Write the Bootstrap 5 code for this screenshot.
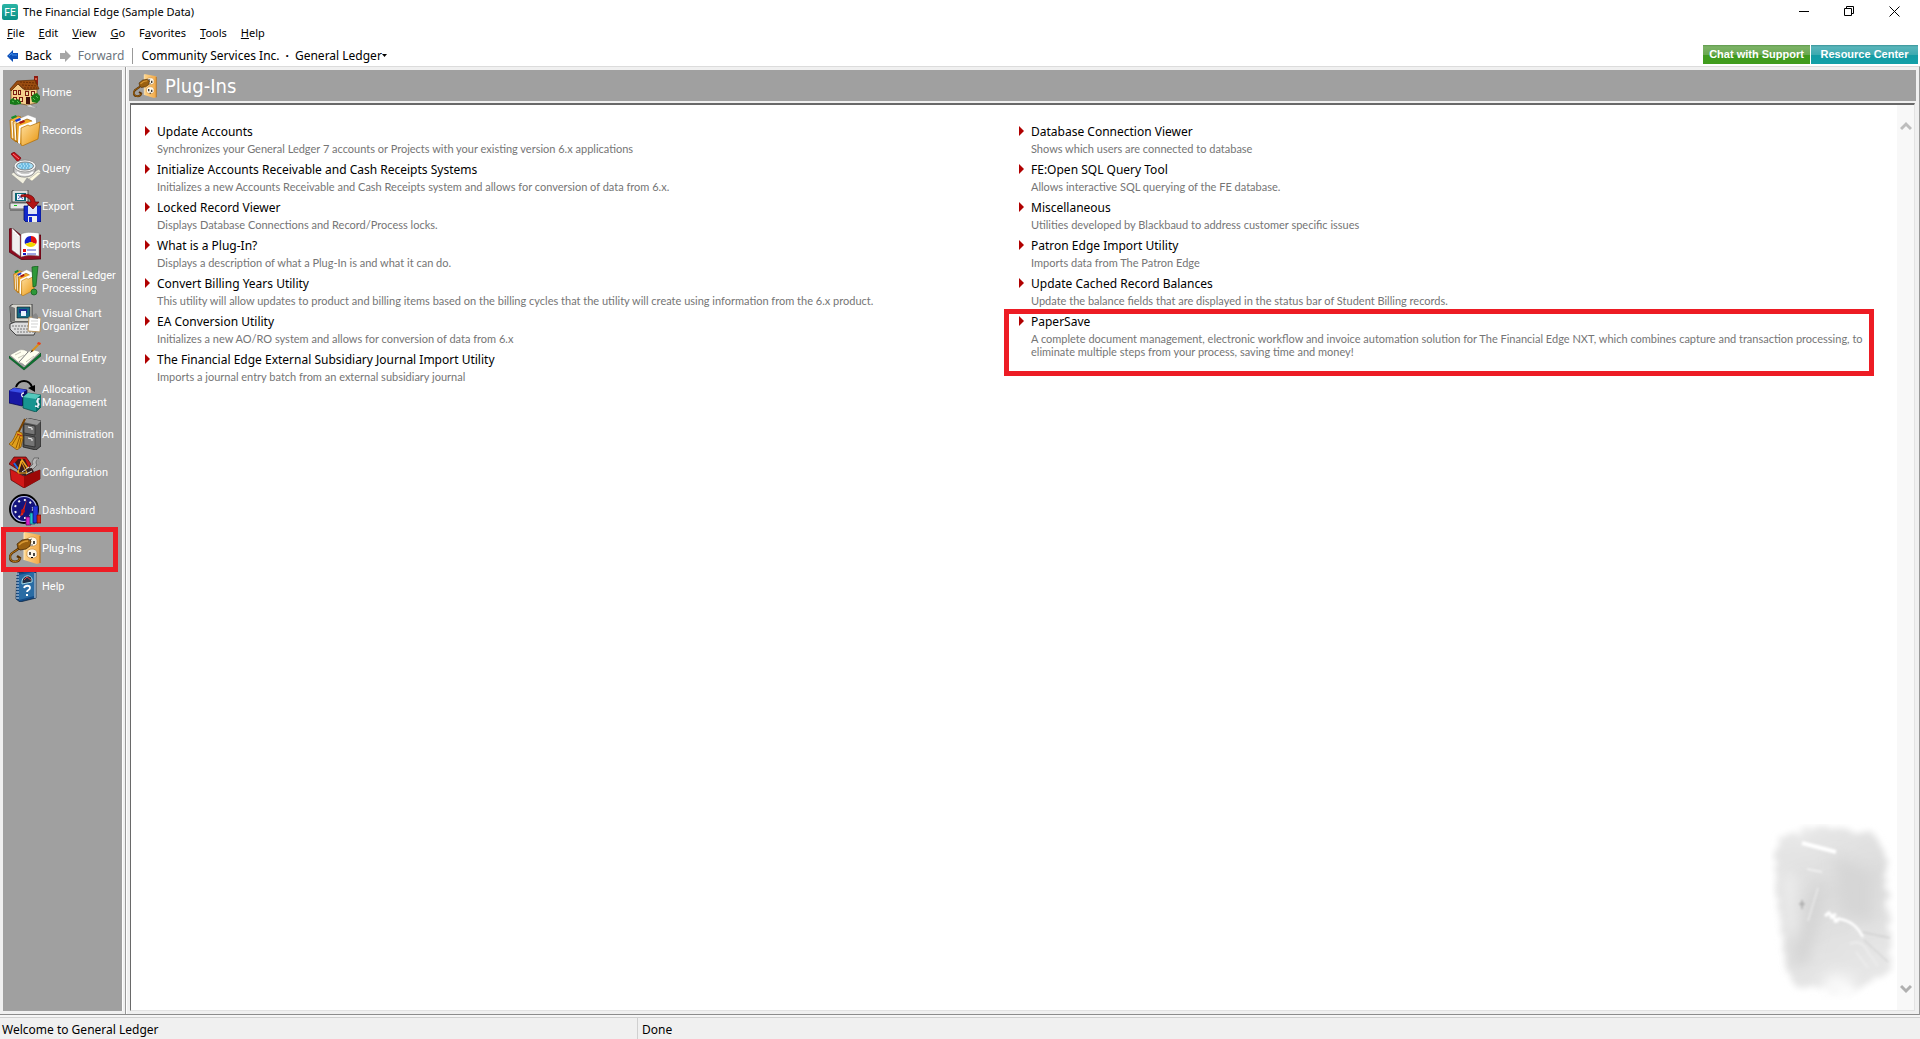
<!DOCTYPE html>
<html lang="en">
<head>
<meta charset="utf-8">
<meta name="viewport" content="width=device-width, initial-scale=1">
<title>The Financial Edge (Sample Data)</title>
<link href="https://cdn.jsdelivr.net/npm/bootstrap@5.3.0/dist/css/bootstrap.min.css" rel="stylesheet">
<style>
  body { font: 12px/18px "Noto Sans", sans-serif; color: #000; background: #fff; }
  button { border: 0; background: none; padding: 0; color: inherit; font: inherit; text-align: left; }
  a { color: inherit; text-decoration: none; }
  svg { display: block; flex: none; }
  .title-bar { height: 23px; padding-left: 2px; padding-right: 20px; gap: 5px; font-size: 11px; }
  .title-bar .fe-logo { width: 16px; height: 16px; border-radius: 2px; background: linear-gradient(#2bb5a5, #0a8f86); color: #fff; font: 11px/16px "Noto Sans", sans-serif; text-align: center; }
  .win-controls { gap: 34px; }
  .menu-bar { height: 20px; padding-left: 7px; gap: 14px; font-size: 11px; }
  .tool-bar { height: 23px; padding: 2px 2px 0 7px; }
  .tool-bar .nav-btn { gap: 7px; }
  .tool-sep { width: 1px; height: 16px; background: #999; margin: 0 8px; }
  .dot-sep { margin: 0 6px; }
  .promo-bar { gap: 1px; }
  .promo { height: 19px; width: 107px; color: #fff; font: bold 11px/19px "Liberation Sans", sans-serif; text-align: center; }
  .promo-green { background: linear-gradient(#5f9a4c, #7cb366 10%, #6aa850 50%, #419a1f 52%, #3f9c1c); }
  .promo-teal { background: linear-gradient(#3a9499, #58b5ba 10%, #3daab0 50%, #149ba3 52%, #12a0a8); }
  .work-area { background: #f0f0f0; border-top: 1px solid #dcdcdc; border-bottom: 1px solid #8c8c8c; border-right: 1px solid #999; }
  .side-pane { width: 126px; padding: 3px 2px 3px 3px; border-right: 1px solid #999; }
  .side-list { background: #a0a0a0; padding-top: 3px; border-right: 1px solid #fff; }
  .side-link { height: 38px; padding-left: 6px; gap: 1px; color: #fff; font: 11px/13px Roboto, sans-serif; }
  .marked { position: relative; }
  .marked::after { content: ""; position: absolute; border: 5px solid #ed1c24; pointer-events: none; z-index: 2; }
  .side-link.marked::after { inset: -2px 4px -5px -2px; }
  .main-pane { padding: 3px 3px 3px 2px; border-left: 1px solid #fff; }
  .pane-head { height: 31px; background: #a0a0a0; padding-left: 4px; gap: 8px; color: #fff; font: 20px/28px "DejaVu Sans Condensed", "DejaVu Sans", sans-serif; }
  .pane-body { margin: 2px 1px 0 1px; background: #fff; border: 1px solid #e3e3e3; border-left-color: #696969; border-top: 2px solid #696969; position: relative; }
  .plug-area { padding: 18px 4px 0 14px; }
  .plug-item { margin-bottom: 6px; padding-right: 26px; }
  .plug-item > svg { margin-top: 3px; margin-right: 7px; }
  .plug-item a { display: block; height: 19px; }
  .plug-item p { margin: 0; color: #757575; font: 11px/13px Lato, sans-serif; }
  .plug-item.marked::after { inset: -4px 19px -18px -15px; }
  .scroll-col { width: 17px; background: #f8f8f8; padding: 16px 0; }
  .watermark { position: absolute; right: 18px; bottom: 10px; }
  .status-bar { height: 24px; border-top: 2px solid #f6f6f6; background: #f0f0f0; }
  .status-bar > div { padding: 3px 2px 0; }
  .status-main { width: 638px; border-top: 1px solid #d0d0d0; border-right: 1px solid #d0d0d0; }
  .status-rest { border-top: 1px solid #d0d0d0; }
  .status-bar > .status-rest { padding-left: 4px; }
</style>
<script src="https://cdn.jsdelivr.net/npm/bootstrap@5.3.0/dist/js/bootstrap.bundle.min.js"></script>
</head>
<body>
<svg width="0" height="0" class="position-absolute" aria-hidden="true">
  <defs>
    <linearGradient id="gFolder" x1="0" y1="0" x2="1" y2="1"><stop offset="0" stop-color="#ffe0a0"/><stop offset="1" stop-color="#e8940c"/></linearGradient>
    <linearGradient id="gPlate" x1="0" y1="0" x2="1" y2="0"><stop offset="0" stop-color="#ffd58a"/><stop offset="1" stop-color="#f0a848"/></linearGradient>
    <symbol id="i-plug" viewBox="0 0 32 32">
      <path d="M15 0 31 3v28l-3 1-13-4z" fill="url(#gPlate)"/><path d="M31 4v27" stroke="#b06a10"/><path d="M15 1v27" stroke="#ffeabf"/>
      <path d="M18 8c1-4 9-4 10 0v4c-2 3-8 3-10 0zM18 20c1-4 9-4 10 0v4c-2 3-8 3-10 0z" fill="#fff8e8" stroke="#c98a3a" stroke-width=".7"/>
      <path d="M21 8v3M25 9v3M21 20v3M25 21v3" stroke="#111" stroke-width="1.500"/><path d="M22 25h2v1h-2z"/>
      <path d="M10 16C7 20 1 20 1 25c0 6 9 6 10 1l-3-2" fill="none" stroke="#5a3000" stroke-width="2.400"/><path d="M10 16C7 20 1 20 1 25c0 6 9 6 10 1" fill="none" stroke="#b87818" stroke-width="1"/>
      <path d="M8 12l5-4 6-1 3 2-1 5-4 3-6 1-2-2z" fill="#9a6010" stroke="#4a2800" stroke-width=".8"/><path d="M10 13c3-3 6-4 9-4" stroke="#d99a35" stroke-width="1.500" fill="none"/><path d="M20 8l3-1m-2 6l3 0" stroke="#666"/>
    </symbol>
    <symbol id="i-files" viewBox="0 0 32 32">
      <path d="M1 6 9 2l3 1v18l-5 7-5-4z" fill="#f6b23c" stroke="#a96200" stroke-width=".7"/><path d="M2 3l5-2 1 2-5 2z" fill="#16902c"/>
      <path d="M3 7l1 17" stroke="#fff" stroke-width="1.200"/>
      <path d="M4 8l10-5 3 1v18l-7 7-5-3z" fill="url(#gFolder)" stroke="#9a5c00" stroke-width=".7"/><path d="M7 6l12-5 8 3v5L9 13z" fill="#fff" stroke="#999" stroke-width=".4"/><path d="M6 6l5-2 1 2-5 2z" fill="#1838d8"/>
      <path d="M6 10l1 16" stroke="#fff" stroke-width="1.200"/>
      <path d="M7 10l11-5 5 2v16l-11 7-4-2z" fill="#f3a928" stroke="#8c5300" stroke-width=".7"/><path d="M10 8l5-2 1 2-5 2z" fill="#a81414"/><path d="M10 12l17-6v4l-15 6-1 14-2-1z" fill="#fff"/>
      <path d="M12 14l7-3 2 1 10-4-2 17-16 7-1-2z" fill="url(#gFolder)" stroke="#b06c00" stroke-width=".7"/>
    </symbol>
  </defs>
</svg>

<div class="vh-100 d-flex flex-column overflow-hidden">
  <header>
    <div class="title-bar d-flex align-items-center">
      <span class="fe-logo" aria-hidden="true">FE</span><span>The Financial Edge (Sample Data)</span>
      <div class="win-controls ms-auto d-flex align-items-center">
        <button aria-label="Minimize"><svg width="11" height="11"><path d="M0 5.500h10" stroke="#000"/></svg></button>
        <button aria-label="Restore"><svg width="11" height="11" fill="none" stroke="#000"><path d="M.5 2.500h7v7h-7zM2.500 2.500v-2h7v7h-2"/></svg></button>
        <button aria-label="Close"><svg width="11" height="11"><path d="M.5.5l10 10m0-10l-10 10" stroke="#000"/></svg></button>
      </div>
    </div>
    <nav class="menu-bar d-flex align-items-center" aria-label="Menu">
      <button><u>F</u>ile</button><button><u>E</u>dit</button><button><u>V</u>iew</button><button><u>G</u>o</button><button>F<u>a</u>vorites</button><button><u>T</u>ools</button><button><u>H</u>elp</button>
    </nav>
    <div class="tool-bar d-flex align-items-center">
      <button class="nav-btn d-flex align-items-center"><svg width="11" height="12"><path d="M0 6l6-6v3h5v6H6v3z" fill="#0d4fb8"/><path d="M2 6l3-3v2h5" fill="none" stroke="#3f8be8"/></svg>Back</button>
      <button class="nav-btn d-flex align-items-center text-secondary ms-2"><svg width="11" height="12"><path d="M11 6L5 0v3H0v6h5v3z" fill="#a6a6a6"/></svg>Forward</button>
      <span class="tool-sep"></span>
      <a href="#">Community Services Inc.</a><span class="dot-sep fw-bold">·</span>
      <button class="d-flex align-items-center">General Ledger<svg width="5" height="3"><path d="M0 0h5L2.500 3z"/></svg></button>
      <div class="promo-bar ms-auto d-flex align-self-start"><a href="#" class="promo promo-green">Chat with Support</a><a href="#" class="promo promo-teal">Resource Center</a></div>
    </div>
  </header>

  <div class="work-area flex-grow-1 d-flex">
    <aside class="side-pane d-flex flex-shrink-0">
      <nav class="side-list flex-grow-1" aria-label="Sections">
        <a href="#" class="side-link d-flex align-items-center"><svg width="32" height="32">
          <path d="M16 28l5-1 2 3 5 1-3 1-6-1z" fill="#d4d4d4" stroke="#888" stroke-width=".5"/>
          <path d="M2 13l6-6 6 6h14v14l-10 2L2 26z" fill="#f6cf8c" stroke="#5c3608" stroke-width=".6"/>
          <path d="M25 0h4v9h-4z" fill="#8e1c10"/><path d="M26 2h2v2h-2z" fill="#d95a42"/>
          <path d="M1 13L8 5l18-1 4 9-14 1-7-6-7 7z" fill="#9a4d10" stroke="#5b2800" stroke-width=".7"/><path d="M11 6l16 1M13 9l15 1M15 12l13 0" stroke="#6a2d04" stroke-width="1" stroke-dasharray="2 1"/>
          <path d="M4 14h4v5H4zM9 14h3v5H9zM16 15h4v5h-4zM22 15h4v5h-4zM4 21h4v5H4zM10 21h4v5h-4z" fill="#7a1a10"/><path d="M5 15h2v3H5zM10 15h1v3h-1zM17 16h2v3h-2zM23 16h2v3h-2zM5 22h2v3H5zM11 22h2v3h-2z" fill="#e8dfa0"/>
          <path d="M17 21h4v7h-4z" fill="#401008"/>
          <path d="M1 24l3-2 2 2 3-1 3 3v2l-6 1-5-1zM22 21l3-3 3-1 3 3v4l-3 3-5-1z" fill="#187818"/><path d="M3 25l2 1m3-1l2 2m14-5l2 2m1-4l2 2" stroke="#55c050"/></svg>Home</a>
        <a href="#" class="side-link d-flex align-items-center"><svg width="32" height="32"><use href="#i-files"/></svg>Records</a>
        <a href="#" class="side-link d-flex align-items-center"><svg width="32" height="32">
          <path d="M2 22l8-5 12 5 8-5 2 3-9 9-5-3-4 6z" fill="#f2f0e0" stroke="#888" stroke-width=".5"/><path d="M20 27l9-7 3 1-9 8z" fill="#fffbe0" stroke="#999" stroke-width=".5"/>
          <path d="M2 2l3-2 7 6-3 4z" fill="#c81018" stroke="#700008" stroke-width=".7"/><path d="M4 2l6 5" stroke="#ff8080"/>
          <path d="M5 15v5c3 7 19 7 21-1v-5z" fill="#ccc" stroke="#666" stroke-width=".6"/><path d="M8 20c4 4 12 4 16 0" fill="none" stroke="#fff" stroke-width="1.500"/>
          <ellipse cx="16" cy="14" rx="11" ry="6" fill="#f4f4f4" stroke="#888" stroke-width=".8"/><ellipse cx="16" cy="14" rx="8.500" ry="4" fill="#a5dcf4" stroke="#555" stroke-width=".7"/><path d="M10 14h12M12 16h9M12 12h8" stroke="#3c9ccc" stroke-dasharray="2 1"/></svg>Query</a>
        <a href="#" class="side-link d-flex align-items-center"><svg width="32" height="32">
          <path d="M3 1l2-1h14v12H3z" fill="#ddd" stroke="#333" stroke-width=".8"/><path d="M6 3h11v8H6z" fill="#0c6674"/><path d="M8 4h7v6H8z" fill="#f5f5ff"/><path d="M9 5l5 4m0-4l-5 4" stroke="#5068c0"/>
          <path d="M1 13h18v6H1z" fill="#e6e6e6" stroke="#444" stroke-width=".8"/><path d="M5 15h3v1H5z" fill="#10c818"/><path d="M1 20h14v1H1z" fill="#777"/>
          <path d="M15 16h17v16H17l-2-2z" fill="#1228cc" stroke="#00106a" stroke-width=".8"/><path d="M19 16h9v8h-9z" fill="#dfe4f4"/><path d="M19 26h9v6h-9z" fill="#eee"/><path d="M20 27h3v5h-3z" fill="#1228cc"/>
          <path d="M12 5c8-2 14 1 14 7h4l-6 7-7-7h5c-1-4-4-6-10-5z" fill="#b41414" stroke="#600" stroke-width=".7"/></svg>Export</a>
        <a href="#" class="side-link d-flex align-items-center"><svg width="32" height="32">
          <path d="M0 1l3-1 9 7h20v24l-19 1L0 24z" fill="#8c0c20" stroke="#3a0008" stroke-width=".6"/><path d="M3 0l8 8v20l-8-6z" fill="#fff" stroke="#888" stroke-width=".6"/><path d="M5 4v18M7 6v18M9 8v18" stroke="#ccc" stroke-width=".6"/>
          <path d="M12 6c4-2 10-2 18-1v23c-7-1-13-1-18 1z" fill="#fff" stroke="#777" stroke-width=".5"/>
          <path d="M22 14V8a6 6 0 0 0-6 8z" fill="#1420c8"/><path d="M22 14V8c5 0 7 5 5 8z" fill="#e01010"/><path d="M22 14l5 2c-2 4-8 4-11 0z" fill="#f0d800"/>
          <path d="M14 21h3v3h-3z" fill="#e01010"/><path d="M14 25h3v2h-3z" fill="#1420c8"/><path d="M18 22h9M18 26h9" stroke="#4450c8"/></svg>Reports</a>
        <a href="#" class="side-link d-flex align-items-center"><svg width="32" height="32">
          <svg x="4" y="3" width="23" height="27" viewBox="0 0 32 32" preserveAspectRatio="none"><use href="#i-files"/></svg>
          <path d="M23 1l6-1-2 20-3 1z" fill="#2e9838" stroke="#0d5a18" stroke-width=".7"/><circle cx="25" cy="26" r="3" fill="#2e9838" stroke="#0d5a18" stroke-width=".7"/></svg>General Ledger<br>Processing</a>
        <a href="#" class="side-link d-flex align-items-center"><svg width="32" height="32">
          <path d="M1 2l3-2h19v15l-3 3H2z" fill="#d8d8d0" stroke="#222" stroke-width=".8"/><path d="M1 2l5 2v13H2z" fill="#777"/><path d="M8 3h13v11H8z" fill="#146a84" stroke="#111" stroke-width=".6"/><path d="M10 5h8v4h-8z" fill="#1c2c90"/><path d="M12 7h5v5h-5z" fill="#e8f2ff"/>
          <path d="M1 20l5-2h18l3 8-2 5H7l-6-6z" fill="#ddd" stroke="#222" stroke-width=".8"/><path d="M3 22h18M5 25h17M8 28h18" stroke="#777" stroke-dasharray="2 1"/>
          <path d="M20 13l12 1-1 14-12-1z" fill="#fff" stroke="#b5905a"/><path d="M23 14l1-3 3-2 2 3v3z" fill="#888"/><path d="M22 17h7M22 20h7M22 23h6" stroke="#bbb" stroke-width=".7"/></svg>Visual Chart<br>Organizer</a>
        <a href="#" class="side-link d-flex align-items-center"><svg width="32" height="32">
          <path d="M0 14l15 12 17-15v3L15 28 0 16z" fill="#0a7830" stroke="#033c14" stroke-width=".5"/>
          <path d="M1 13l9-5c4-1 7 0 9 2 3-2 6-3 12 0L16 24c-2-3-5-3-7-4z" fill="#fffff0" stroke="#888" stroke-width=".6"/><path d="M19 10L10 20" stroke="#777"/><path d="M6 13l6-3m-3 6l6-3m2 7l8-6m-5 3" stroke="#b8b8a8" stroke-width=".8"/>
          <path d="M31 1l-8 8" stroke="#d89018" stroke-width="2"/><path d="M29 0l3 1-1 2-3-1z" fill="#e84020"/><path d="M23 8l1 1-3 2z"/></svg>Journal Entry</a>
        <a href="#" class="side-link d-flex align-items-center"><svg width="32" height="32">
          <path d="M0 11l5-3 13 2v12l-5 4-13-3z" fill="#1818a4" stroke="#00004c" stroke-width=".7"/><path d="M0 11l5-3 13 2-5 3z" fill="#3c50e8"/><path d="M13 13l5-3v12l-5 4z" fill="#0a0a6a"/>
          <path d="M14 17l5-4 13 2v12l-5 5-13-4z" fill="#189490" stroke="#044844" stroke-width=".7"/><path d="M14 17l5-4 13 2-5 4z" fill="#54c8bc"/><path d="M27 19l5-4v12l-5 5z" fill="#087068"/>
          <path d="M31 19c-3-1-4 3-2 4s1 4-3 3M29 18v10M15 13c-3 0-3 3-1 4" stroke="#f4f4ff" stroke-width="1.300" fill="none"/>
          <path d="M7 7C10-1 20-1 23 7" fill="none" stroke="#000" stroke-width="2"/><path d="M19 8l7-3v7z"/></svg>Allocation<br>Management</a>
        <a href="#" class="side-link d-flex align-items-center"><svg width="32" height="32">
          <path d="M14 4l4-4 14 3v25l-5 4-13-3z" fill="#555" stroke="#111" stroke-width=".7"/><path d="M18 0l14 3-4 4-14-3z" fill="#999"/><path d="M15 6l11 2v9l-11-2zM15 17l11 2v10l-11-2z" fill="#757575" stroke="#222" stroke-width=".7"/><path d="M19 9l4 1v2M19 20l4 1v2" stroke="#f5f5f5" fill="none"/>
          <path d="M16 1L9 15" stroke="#7a4200" stroke-width="2"/><path d="M8 13l5 2 1 5-2 9-4 3-8-6c4-3 5-6 8-13z" fill="#e0a01c" stroke="#7c4800" stroke-width=".7"/><path d="M9 17L3 27M11 18L7 30M12 20l-2 10" stroke="#9a5c00"/><path d="M8 16l5 2" stroke="#b01818"/></svg>Administration</a>
        <a href="#" class="side-link d-flex align-items-center"><svg width="32" height="32">
          <path d="M0 8L5 1l12 0 5 7-6 10z" fill="#c01414" stroke="#4a0000" stroke-width=".7"/><path d="M4 9l5-6h7l3 7-5 7z" fill="#401818"/>
          <path d="M22 15l6-6c-2-3 0-5 0-5l2-2-5 0-2 4 1 2-7 7z" fill="#b8b8b8" stroke="#444" stroke-width=".6"/><path d="M28 3l3 4-2 3" fill="none" stroke="#999" stroke-width="2"/>
          <path d="M5 7l9 13" stroke="#2068e0" stroke-width="2"/><path d="M13 4L8 18l14-1z" fill="none" stroke="#f0a820" stroke-width="1.500"/>
          <path d="M1 13l14 7 16-6v9l-16 9L2 24z" fill="#d01818" stroke="#580000" stroke-width=".7"/><path d="M15 20v12l16-9v-9z" fill="#9c0808"/><path d="M8 13l2 4 6 3 9-4-2-4z" fill="#342020"/><path d="M13 16l7-5m-3 7l6-3" stroke="#ddd"/><path d="M12 5L9 17l9 0z" fill="none" stroke="#f0a820"/></svg>Configuration</a>
        <a href="#" class="side-link d-flex align-items-center"><svg width="32" height="32">
          <circle cx="15" cy="15" r="14" fill="#14147c" stroke="#000" stroke-width="2"/><circle cx="15" cy="15" r="12.500" fill="none" stroke="#b8bce8" stroke-width="1.200"/><circle cx="15" cy="15" r="9" fill="none" stroke="#eee" stroke-width="2" stroke-dasharray="2 4"/>
          <path d="M18 5l-7 17 3-1z" fill="#e02818"/><circle cx="14" cy="17" r="2" fill="#c01010"/>
          <path d="M17 23h5v8h-5z" fill="#d820c8" stroke="#5c0058" stroke-width=".7"/><path d="M21 19h5v11h-5z" fill="#20c4cc" stroke="#045c64" stroke-width=".7"/><path d="M24 12h5v17h-5z" fill="#2434d8" stroke="#000860" stroke-width=".7"/><path d="M28 21h4v8h-4z" fill="#d02814" stroke="#600" stroke-width=".7"/></svg>Dashboard</a>
        <a href="#" class="side-link marked d-flex align-items-center" aria-current="page"><svg width="32" height="32"><use href="#i-plug"/></svg>Plug-Ins</a>
        <a href="#" class="side-link d-flex align-items-center"><svg width="32" height="32">
          <path d="M8 3L23 0l4 2v26L11 32l-4-3z" fill="#134c88" stroke="#06203c" stroke-width=".7"/><path d="M10 5l15-3v24l-15 4z" fill="#2a6ca4"/><path d="M26 3v25" stroke="#e8e8e8"/>
          <path d="M7 4h3M7 7h3M7 10h3M7 13h3M7 16h3M7 19h3M7 22h3M7 25h3M7 28h3" stroke="#d8e8f8"/><path d="M13 11c1-6 9-7 10-2v3l-10 2z" fill="#203048" stroke="#a8dce8"/><path d="M15 10l3-3 4 3" fill="none" stroke="#e04040"/>
          <path d="M15 18c1-3 6-3 6 0 0 2-3 2-3 4" fill="none" stroke="#fff" stroke-width="1.800"/><path d="M17 24h2v2h-2z" fill="#fff"/></svg>Help</a>
      </nav>
    </aside>

    <main class="main-pane flex-grow-1 d-flex flex-column">
      <h1 class="pane-head d-flex align-items-center m-0"><svg width="24" height="24"><use href="#i-plug"/></svg>Plug-Ins</h1>
      <div class="pane-body flex-grow-1 d-flex">
        <svg class="watermark" width="126" height="176" aria-hidden="true">
          <defs>
            <filter id="brush" x="-10%" y="-10%" width="120%" height="120%"><feTurbulence type="fractalNoise" baseFrequency=".05 .12" numOctaves="3" seed="4"/><feDisplacementMap in="SourceGraphic" scale="18"/><feGaussianBlur stdDeviation="3"/></filter>
            <filter id="haze"><feGaussianBlur stdDeviation="7"/></filter>
            <filter id="fine"><feGaussianBlur stdDeviation=".8"/></filter>
            <linearGradient id="gWash" x1="0" y1="0" x2=".3" y2="1"><stop offset="0" stop-color="#e9e9e9"/><stop offset=".5" stop-color="#dcdcdc"/><stop offset="1" stop-color="#e6e6e6"/></linearGradient>
          </defs>
          <path d="M10 14L56 4l46 3 12 20 4 50 4 60-12 20-40 10-46-4-10-30-6-60-2-50z" fill="url(#gWash)" filter="url(#brush)"/>
          <g filter="url(#haze)"><path d="M64 30l40 20v50l-34-10z" fill="#d6d6d6"/><path d="M46 60l10 0-20 80-14 0z" fill="#d2d2d2"/><path d="M56 150l30 4-10 20-24-4z" fill="#fafafa"/><path d="M12 50l14 0 0 60-10 0z" fill="#eee"/></g>
          <g filter="url(#fine)" fill="none" stroke="#fff"><path d="M32 19l34 9" stroke-width="4"/><path d="M37 45l15 3" stroke-width="1"/><path d="M48 64L38 97" stroke="#f4f4f4"/><path d="M55 92l5-4M60 94l6-4M64 98l6-4M60 90l8 8" stroke-width="3"/><path d="M70 95c12 2 18 9 23 18" stroke-width="2.500"/><path d="M92 108l28 6M94 116l24 22" stroke="#c8c8c8"/><path d="M80 120c8-4 14 0 18 8l10 14M86 128l12 16" stroke="#ececec" stroke-width="2"/><path d="M32 76v9m-3-5h6" stroke="#8f8f8f"/></g>
        </svg>
        <div class="plug-area row g-0 flex-grow-1 align-content-start position-relative">
          <div class="col-6" id="plugLeft"></div>
          <div class="col-6" id="plugRight"></div>
        </div>
        <div class="scroll-col position-relative flex-shrink-0 d-flex flex-column justify-content-between align-items-center">
          <button aria-label="Scroll up"><svg width="12" height="10" fill="none" stroke="#bdbdbd" stroke-width="3"><path d="M1 8l5-5 5 5"/></svg></button>
          <button aria-label="Scroll down"><svg width="12" height="10" fill="none" stroke="#b0b0b0" stroke-width="3"><path d="M1 2l5 5 5-5"/></svg></button>
        </div>
      </div>
    </main>
  </div>

  <footer class="status-bar d-flex flex-shrink-0">
    <div class="status-main">Welcome to General Ledger</div>
    <div class="status-rest flex-grow-1">Done</div>
  </footer>
</div>
<script>
  const plugIns = {
    plugLeft: [
      ["Update Accounts", "Synchronizes your General Ledger 7 accounts or Projects with your existing version 6.x applications"],
      ["Initialize Accounts Receivable and Cash Receipts Systems", "Initializes a new Accounts Receivable and Cash Receipts system and allows for conversion of data from 6.x."],
      ["Locked Record Viewer", "Displays Database Connections and Record/Process locks."],
      ["What is a Plug-In?", "Displays a description of what a Plug-In is and what it can do."],
      ["Convert Billing Years Utility", "This utility will allow updates to product and billing items based on the billing cycles that the utility will create using information from the 6.x product."],
      ["EA Conversion Utility", "Initializes a new AO/RO system and allows for conversion of data from 6.x"],
      ["The Financial Edge External Subsidiary Journal Import Utility", "Imports a journal entry batch from an external subsidiary journal"]
    ],
    plugRight: [
      ["Database Connection Viewer", "Shows which users are connected to database"],
      ["FE:Open SQL Query Tool", "Allows interactive SQL querying of the FE database."],
      ["Miscellaneous", "Utilities developed by Blackbaud to address customer specific issues"],
      ["Patron Edge Import Utility", "Imports data from The Patron Edge"],
      ["Update Cached Record Balances", "Update the balance fields that are displayed in the status bar of Student Billing records."],
      ["PaperSave", "A complete document management, electronic workflow and invoice automation solution for The Financial Edge NXT, which combines capture and transaction processing, to eliminate multiple steps from your process, saving time and money!", true]
    ]
  };
  for (const [id, items] of Object.entries(plugIns)) {
    document.getElementById(id).innerHTML = items.map(([name, text, marked]) =>
      `<div class="plug-item d-flex align-items-start${marked ? " marked" : ""}">
        <svg width="5" height="10"><path d="M0 0l5 5-5 5z" fill="#b00000"/></svg>
        <div><a href="#">${name}</a><p>${text}</p></div></div>`).join("");
  }
</script>
</body>
</html>
